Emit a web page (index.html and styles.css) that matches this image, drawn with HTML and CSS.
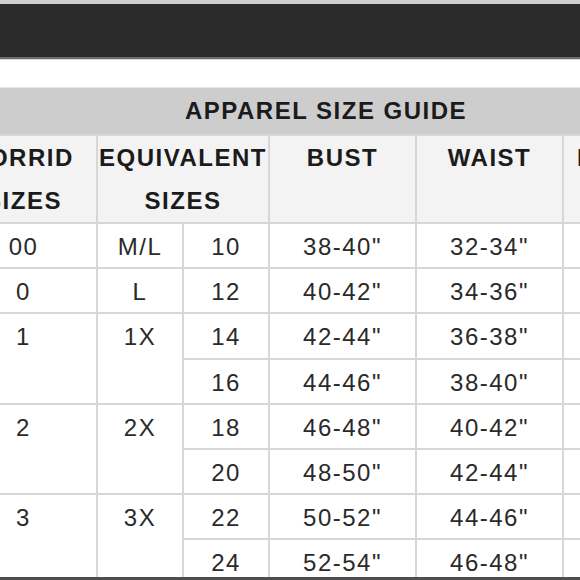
FILE: index.html
```html
<!DOCTYPE html>
<html lang="en">
<head>
<meta charset="utf-8">
<title>Apparel Size Guide</title>
<link rel="stylesheet" href="styles.css">
</head>
<body>
  <div class="top-strip"></div>
  <header class="appbar"></header>
  <div class="appbar-shadow"></div>
  <main class="sheet">
    <section class="guide">
      <div class="guide-title">APPAREL SIZE GUIDE</div>
      <table class="size-table">
        <colgroup>
          <col class="col-torrid">
          <col class="col-eq">
          <col class="col-eq">
          <col class="col-meas">
          <col class="col-meas">
          <col class="col-last">
        </colgroup>
        <thead>
          <tr class="head-row">
            <th>TORRID<br>SIZES</th>
            <th colspan="2">EQUIVALENT<br>SIZES</th>
            <th>BUST</th>
            <th>WAIST</th>
            <th class="th-last">HIPS</th>
          </tr>
        </thead>
        <tbody>
          <tr class="data-row"><td>00</td><td>M/L</td><td>10</td><td>38-40"</td><td>32-34"</td><td>40-42"</td></tr>
          <tr class="data-row"><td>0</td><td>L</td><td>12</td><td>40-42"</td><td>34-36"</td><td>42-44"</td></tr>
          <tr class="data-row"><td rowspan="2">1</td><td rowspan="2">1X</td><td>14</td><td>42-44"</td><td>36-38"</td><td>44-46"</td></tr>
          <tr class="data-row"><td>16</td><td>44-46"</td><td>38-40"</td><td>46-48"</td></tr>
          <tr class="data-row"><td rowspan="2">2</td><td rowspan="2">2X</td><td>18</td><td>46-48"</td><td>40-42"</td><td>48-50"</td></tr>
          <tr class="data-row"><td>20</td><td>48-50"</td><td>42-44"</td><td>50-52"</td></tr>
          <tr class="data-row"><td rowspan="2">3</td><td rowspan="2">3X</td><td>22</td><td>50-52"</td><td>44-46"</td><td>52-54"</td></tr>
          <tr class="data-row"><td>24</td><td>52-54"</td><td>46-48"</td><td>54-56"</td></tr>
        </tbody>
      </table>
    </section>
  </main>
  <div class="bottom-bar"></div>
</body>
</html>
```
FILE: styles.css
```css
html, body {
  margin: 0;
  padding: 0;
}

body {
  width: 580px;
  height: 580px;
  overflow: hidden;
  display: flex;
  flex-direction: column;
  background: #ffffff;
  font-family: "Liberation Sans", Arial, sans-serif;
  color: #262626;
}

.top-strip {
  flex: none;
  height: 4px;
  background: #cfcfcf;
}

.appbar {
  flex: none;
  height: 53px;
  background: #2b2b2b;
  border-bottom: 2px solid #6e6e6e;
}

.appbar-shadow {
  flex: none;
  height: 1px;
  background: #d6d6d6;
}

.sheet {
  flex: 1;
  min-height: 0;
  overflow: hidden;
  padding-top: 27px;
}

.guide {
  margin-left: -51px;
  width: 754px;
}

.guide-title {
  border-top: 1px solid #e8e8e8;
  background: #cdcdcd;
  height: 46px;
  line-height: 46px;
  text-align: center;
  font-weight: bold;
  font-size: 24px;
  letter-spacing: 1.5px;
  color: #1b1b1b;
}

.size-table {
  width: 754px;
  table-layout: fixed;
  border-collapse: collapse;
}

.col-torrid { width: 147px; }
.col-eq { width: 86px; }
.col-meas { width: 147px; }
.col-last { width: 141px; }

.size-table th,
.size-table td {
  border: 2px solid #d7d7d7;
  padding: 0;
  text-align: center;
  vertical-align: top;
  font-size: 24px;
  letter-spacing: 1.5px;
  line-height: 43px;
}

.size-table th {
  background: #f3f3f3;
  font-weight: bold;
  color: #1b1b1b;
}

.size-table td {
  padding-top: 3px;
  line-height: 40px;
  color: #2a2a2a;
}

.head-row {
  height: 88px;
}

.data-row {
  height: 45.2px;
}

.size-table .th-last {
  text-align: left;
  padding-left: 13px;
}

.bottom-bar {
  flex: none;
  height: 3px;
  background: #4e4e4e;
}
```
